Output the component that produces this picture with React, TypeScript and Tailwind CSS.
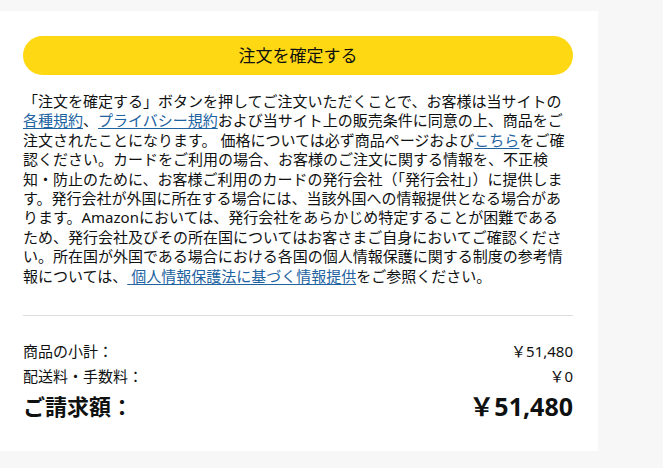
import React from "react";

export default function App() {
  const link = "text-[#2162a1] underline underline-offset-2";
  return (
    <div
      className="min-h-[468px] w-[663px] bg-[#f7f7f7] pt-[11px] text-[#0f1111]"
      style={{ fontFamily: '"Noto Sans", "Noto Sans CJK JP", sans-serif' }}
    >
      <div className="h-[440px] w-[598px] bg-white pl-[23px] pr-[25px] pt-[25px]">
        <button className="flex h-[39px] w-full items-center justify-center rounded-full bg-[#ffd814] text-[17px] text-[#0f1111]">
          注文を確定する
        </button>
        <p className="mt-[17px] text-[15px] leading-[19.4px]">
          「注文を確定する」ボタンを押してご注文いただくことで、お客様は当サイトの
          <a className={link}>各種規約</a>、<a className={link}>プライバシー規約</a>
          および当サイト上の販売条件に同意の上、商品をご注文されたことになります。 価格については必ず商品ページおよび
          <a className={link}>こちら</a>
          をご確認ください。カードをご利用の場合、お客様のご注文に関する情報を、不正検知・防止のために、お客様ご利用のカードの発行会社（｢発行会社｣）に提供します。発行会社が外国に所在する場合には、当該外国への情報提供となる場合があります。Amazonにおいては、発行会社をあらかじめ特定することが困難であるため、発行会社及びその所在国についてはお客さまご自身においてご確認ください。所在国が外国である場合における各国の個人情報保護に関する制度の参考情報については、
          <a className={link}>{" "}個人情報保護法に基づく情報提供</a>
          をご参照ください。
        </p>
        <div className="mt-[29px] h-px w-full bg-[#dddddd]" />
        <div className="mt-[22px] flex items-center justify-between text-[15px] leading-[26px]">
          <span>商品の小計：</span>
          <span>￥51,480</span>
        </div>
        <div className="flex items-center justify-between text-[15px] leading-[24px]">
          <span>配送料・手数料：</span>
          <span>￥0</span>
        </div>
        <div className="flex items-center justify-between font-bold leading-[36px]">
          <span className="text-[22px]">ご請求額：</span>
          <span className="text-[25px]">￥51,480</span>
        </div>
      </div>
    </div>
  );
}
